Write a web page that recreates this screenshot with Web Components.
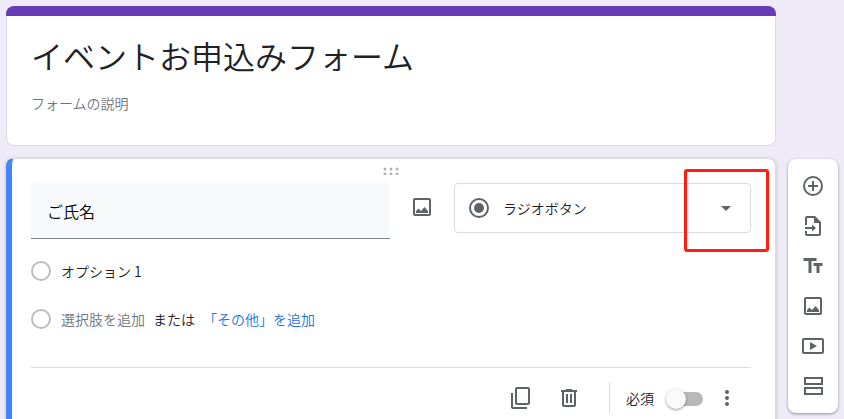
<!DOCTYPE html>
<html lang="ja">
<head>
  <meta charset="utf-8">
  <meta name="viewport" content="width=device-width, initial-scale=1">
  <title>イベントお申込みフォーム</title>
  <style>
    :root {
      --accent: #673ab7;
      --page: #eeeaf8;
      --line: #dadce0;
      --icon: #5f6368;
      --text: #202124;
      --muted: #70757a;
    }
    body {
      margin: 0;
      height: 100vh;
      overflow: hidden;
      background: var(--page);
      color: var(--text);
      font: 350 14px/20px "Noto Sans CJK JP", sans-serif;
    }
  </style>
</head>
<body>
  <form-editor>
    <form-header>
      <span slot="title">イベントお申込みフォーム</span>
      <span slot="description">フォームの説明</span>
    </form-header>
    <question-card question="ご氏名" type="ラジオボタン">
      <option-row>オプション 1</option-row>
      <option-row add></option-row>
    </question-card>
    <side-toolbar slot="side"></side-toolbar>
  </form-editor>

  <script>
    const ICONS = {
      add: '<path d="M12 2a10 10 0 1 0 0 20 10 10 0 0 0 0-20zm0 18a8 8 0 1 1 0-16 8 8 0 0 1 0 16z"/><path d="M13 7h-2v4H7v2h4v4h2v-4h4v-2h-4z"/>',
      import: '<path d="M14 2H6c-1.1 0-2 .9-2 2v7h2V4h7v5h5v11H6v-3H4v3c0 1.1.9 2 2 2h12c1.1 0 2-.9 2-2V8z"/><path d="M13 3v6h6z"/><path d="M4 13v2h7v2.500l4-3.500-4-3.500V13z"/>',
      text: '<path d="M2.5 4v3h5v12h3V7h5V4zm19 5h-9v3h3v7h3v-7h3z"/>',
      image: '<path d="M19 3H5c-1.1 0-2 .9-2 2v14c0 1.1.9 2 2 2h14c1.1 0 2-.9 2-2V5c0-1.1-.9-2-2-2zm0 16H5V5h14z"/><path d="M6 18v-2l2.5-2.5 2.5 2.5 3.500-4L18 16v2z"/>',
      video: '<path d="M21 4H3c-1.1 0-2 .9-2 2v12c0 1.1.9 2 2 2h18c1.1 0 2-.9 2-2V6c0-1.1-.9-2-2-2zm0 14H3V6h18z"/><path d="M9 8v8l7-4z"/>',
      section: '<path d="M3 3v8h19V3zm17 6H5V5h15zM3 13v8h19v-8zm17 6H5v-4h15z"/>',
      copy: '<path d="M19 1H8c-1.1 0-2 .9-2 2v14c0 1.1.9 2 2 2h11c1.1 0 2-.9 2-2V3c0-1.1-.9-2-2-2zm0 16H8V3h11z"/><path d="M4 7H2v14c0 1.1.9 2 2 2h14v-2H4z"/>',
      trash: '<path d="M15 4V3H9v1H4v2h1v13c0 1.1.9 2 2 2h10c1.1 0 2-.9 2-2V6h1V4zm2 15H7V6h10z"/><path d="M9 8h2v9H9zm4 0h2v9h-2z"/>',
      more: '<circle cx="12" cy="6" r="2"/><circle cx="12" cy="12" r="2"/><circle cx="12" cy="18" r="2"/>',
      radio: '<path d="M12 2a10 10 0 1 0 0 20 10 10 0 0 0 0-20zm0 18a8 8 0 1 1 0-16 8 8 0 0 1 0 16z"/><circle cx="12" cy="12" r="5"/>',
      arrow: '<path d="M7 10l5 5 5-5z"/>'
    };

    class FormIcon extends HTMLElement {
      connectedCallback() {
        this.attachShadow({ mode: 'open' });
        this.shadowRoot.innerHTML = `
          <style>
            :host { display: block; width: 24px; height: 24px; color: var(--icon); }
            svg { display: block; fill: currentColor; }
          </style>
          <svg width="24" height="24" viewBox="0 0 24 24" aria-hidden="true">${ICONS[this.getAttribute('name')]}</svg>
        `;
      }
    }

    class IconButton extends HTMLElement {
      connectedCallback() {
        this.attachShadow({ mode: 'open' });
        this.shadowRoot.innerHTML = `
          <style>
            :host { display: block; }
            button {
              display: grid;
              place-items: center;
              width: 100%;
              height: 100%;
              padding: 0;
              border: 0;
              border-radius: 4px;
              background: none;
              cursor: pointer;
            }
            button:hover { background: #f1f3f4; }
          </style>
          <button type="button" aria-label="${this.getAttribute('label')}">
            <form-icon name="${this.getAttribute('icon')}"></form-icon>
          </button>
        `;
      }
    }

    class FormEditor extends HTMLElement {
      connectedCallback() {
        this.attachShadow({ mode: 'open' });
        this.shadowRoot.innerHTML = `
          <style>
            :host {
              display: grid;
              grid-template-columns: minmax(0, 1fr) 50px;
              column-gap: 12px;
              align-items: end;
              padding: 6px;
            }
            main { display: grid; gap: 12px; }
          </style>
          <main><slot></slot></main>
          <slot name="side"></slot>
        `;
      }
    }

    class FormHeader extends HTMLElement {
      connectedCallback() {
        this.attachShadow({ mode: 'open' });
        this.shadowRoot.innerHTML = `
          <style>
            :host { display: block; }
            .bar { height: 10px; border-radius: 8px 8px 0 0; background: var(--accent); }
            header {
              padding: 19px 24px 32px;
              border: 1px solid var(--line);
              border-top: 0;
              border-radius: 0 0 8px 8px;
              background: #fff;
            }
            h1 { margin: 0; font-size: 32px; line-height: 40px; font-weight: inherit; }
            p { margin: 18px 0 0; color: var(--muted); }
          </style>
          <div class="bar"></div>
          <header>
            <h1><slot name="title"></slot></h1>
            <p><slot name="description"></slot></p>
          </header>
        `;
      }
    }

    class OptionRow extends HTMLElement {
      connectedCallback() {
        const content = this.hasAttribute('add')
          ? `<button type="button">選択肢を追加</button>
             <span>または</span>
             <button type="button" class="other">「その他」を追加</button>`
          : '<label for="choice"><slot></slot></label>';
        this.attachShadow({ mode: 'open' });
        this.shadowRoot.innerHTML = `
          <style>
            :host { display: flex; align-items: center; height: 48px; }
            input {
              appearance: none;
              flex: none;
              box-sizing: border-box;
              width: 20px;
              height: 20px;
              margin: 0 10px 0 0;
              border: 2px solid #bdbdbd;
              border-radius: 50%;
            }
            button {
              padding: 0;
              border: 0;
              background: none;
              color: var(--muted);
              font: inherit;
              cursor: pointer;
            }
            span { margin: 0 8px; }
            .other { color: #1a73e8; }
          </style>
          <input type="radio" id="choice" aria-label="選択肢">
          ${content}
        `;
      }
    }

    class TypeSelect extends HTMLElement {
      connectedCallback() {
        this.attachShadow({ mode: 'open' });
        this.shadowRoot.innerHTML = `
          <style>
            :host { display: grid; position: relative; height: 50px; }
            select {
              appearance: none;
              grid-area: 1 / 1;
              width: 100%;
              padding: 0 48px;
              border: 1px solid var(--line);
              border-radius: 4px;
              background: #fff;
              color: inherit;
              font: inherit;
            }
            form-icon { grid-area: 1 / 1; align-self: center; margin: 0 13px; pointer-events: none; z-index: 1; }
            .arrow { justify-self: end; }
            /* highlight frame around the drop-down arrow */
            .frame {
              position: absolute;
              top: -14px;
              right: -18px;
              box-sizing: border-box;
              width: 85px;
              height: 83px;
              border: 3px solid #ff1f11;
              border-radius: 3px;
              pointer-events: none;
              z-index: 2;
            }
          </style>
          <select aria-label="質問の形式"><option>${this.getAttribute('value')}</option></select>
          <form-icon name="radio"></form-icon>
          <form-icon name="arrow" class="arrow"></form-icon>
          <div class="frame"></div>
        `;
      }
    }

    class ToggleSwitch extends HTMLElement {
      connectedCallback() {
        this.attachShadow({ mode: 'open' });
        this.shadowRoot.innerHTML = `
          <style>
            :host { display: block; }
            label { display: flex; align-items: center; gap: 12px; }
            input {
              appearance: none;
              position: relative;
              width: 37px;
              height: 20px;
              margin: 2px 0 0;
            }
            input::before, input::after { content: ""; position: absolute; }
            input::before { inset: 3px 0 3px 4px; border-radius: 8px; background: #b9b9b9; }
            input::after {
              inset: 0 auto 0 0;
              width: 20px;
              border-radius: 50%;
              background: #fafafa;
              box-shadow: 0 1px 3px rgba(0, 0, 0, .4);
            }
            input:checked::before { background: #b39ddb; }
            input:checked::after { inset: 0 0 0 auto; background: var(--accent); }
          </style>
          <label><slot></slot><input type="checkbox" role="switch"></label>
        `;
      }
    }

    class QuestionCard extends HTMLElement {
      connectedCallback() {
        this.attachShadow({ mode: 'open' });
        this.shadowRoot.innerHTML = `
          <style>
            :host {
              display: block;
              padding: 8px 24px 8px 19px;
              border: 1px solid var(--line);
              border-left: 6px solid #4285f4;
              border-radius: 8px;
              background: #fff;
              box-shadow: 0 1px 4px rgba(0, 0, 0, .2);
            }
            .handle { display: block; margin: 0 auto 8px; fill: #b0b0b0; }
            .top {
              display: grid;
              grid-template-columns: minmax(0, 1fr) 24px minmax(0, 297px);
              column-gap: 20px;
              margin-bottom: 8px;
            }
            .question {
              box-sizing: border-box;
              width: 100%;
              height: 56px;
              padding: 0 16px;
              border: 0;
              border-bottom: 1px solid #80868b;
              border-radius: 4px 4px 0 0;
              background: #f8f9fa;
              color: #000;
              font: inherit;
              font-size: 16px;
            }
            .top icon-button { height: 48px; }
            footer {
              display: flex;
              align-items: center;
              justify-content: flex-end;
              margin-top: 24px;
              padding-top: 6px;
              border-top: 1px solid var(--line);
            }
            footer icon-button { width: 48px; height: 48px; }
            .rule { height: 32px; margin: 0 16px; border-left: 1px solid var(--line); }
          </style>
          <svg class="handle" width="16" height="8" aria-hidden="true">
            <circle cx="2" cy="2" r="1.5"/><circle cx="8" cy="2" r="1.5"/><circle cx="14" cy="2" r="1.5"/>
            <circle cx="2" cy="7" r="1.5"/><circle cx="8" cy="7" r="1.5"/><circle cx="14" cy="7" r="1.5"/>
          </svg>
          <div class="top">
            <input class="question" type="text" aria-label="質問" value="${this.getAttribute('question')}">
            <icon-button icon="image" label="画像を追加"></icon-button>
            <type-select value="${this.getAttribute('type')}"></type-select>
          </div>
          <slot></slot>
          <footer>
            <icon-button icon="copy" label="コピーを作成"></icon-button>
            <icon-button icon="trash" label="削除"></icon-button>
            <div class="rule"></div>
            <toggle-switch>必須</toggle-switch>
            <icon-button icon="more" label="その他のオプション"></icon-button>
          </footer>
        `;
      }
    }

    class SideToolbar extends HTMLElement {
      connectedCallback() {
        this.attachShadow({ mode: 'open' });
        this.shadowRoot.innerHTML = `
          <style>
            :host {
              display: block;
              padding: 7px 0;
              border-radius: 8px;
              background: #fff;
              box-shadow: 0 1px 3px rgba(0, 0, 0, .4);
              margin-bottom: 18px;
            }
            icon-button { height: 40px; }
          </style>
          <icon-button icon="add" label="質問を追加"></icon-button>
          <icon-button icon="import" label="質問をインポート"></icon-button>
          <icon-button icon="text" label="タイトルと説明を追加"></icon-button>
          <icon-button icon="image" label="画像を追加"></icon-button>
          <icon-button icon="video" label="動画を追加"></icon-button>
          <icon-button icon="section" label="セクションを追加"></icon-button>
        `;
      }
    }

    customElements.define('form-icon', FormIcon);
    customElements.define('icon-button', IconButton);
    customElements.define('form-editor', FormEditor);
    customElements.define('form-header', FormHeader);
    customElements.define('option-row', OptionRow);
    customElements.define('type-select', TypeSelect);
    customElements.define('toggle-switch', ToggleSwitch);
    customElements.define('question-card', QuestionCard);
    customElements.define('side-toolbar', SideToolbar);
  </script>
</body>
</html>
